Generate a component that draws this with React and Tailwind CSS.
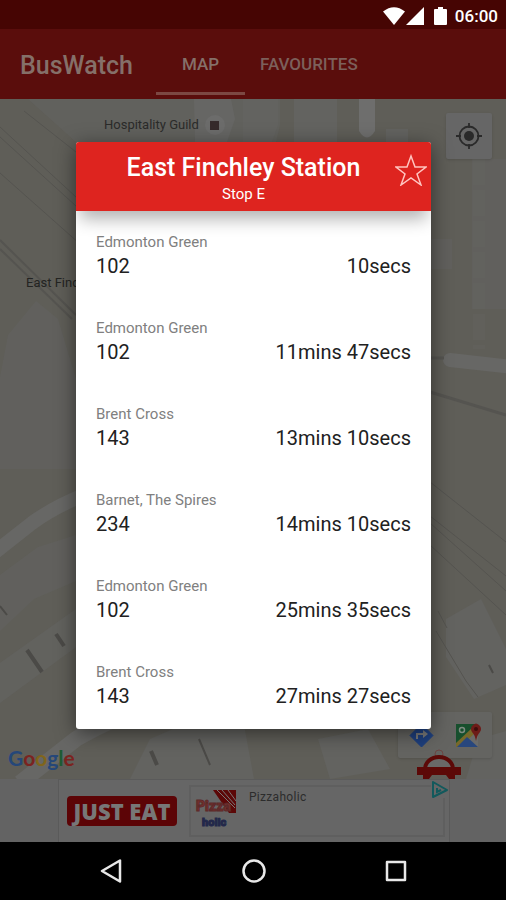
import { useState } from "react"

const arrivals = [
    { id: 1, destination: "Edmonton Green", route: "102", due: "10secs" },
    { id: 2, destination: "Edmonton Green", route: "102", due: "11mins 47secs" },
    { id: 3, destination: "Brent Cross", route: "143", due: "13mins 10secs" },
    { id: 4, destination: "Barnet, The Spires", route: "234", due: "14mins 10secs" },
    { id: 5, destination: "Edmonton Green", route: "102", due: "25mins 35secs" },
    { id: 6, destination: "Brent Cross", route: "143", due: "27mins 27secs" },
]

const StatusBar = () => (
    <div className="flex h-[29px] items-center justify-end bg-[#460503] pr-2 pt-0.5 text-white">
        <svg className="h-[18px] w-[22px]" viewBox="0 0 22 18" fill="currentColor" aria-hidden="true">
            <path d="M0 4.5Q11-4 22 4.5L11 18z" />
        </svg>
        <svg className="ml-px h-[18px] w-[18px]" viewBox="0 0 18 18" fill="currentColor" aria-hidden="true">
            <path d="M18 0v18H0z" />
        </svg>
        <svg className="ml-2.5 h-[18px] w-[13px]" viewBox="0 0 13 18" fill="currentColor" aria-hidden="true">
            <path d="M4 0h5v2h3q1 0 1 1v14q0 1-1 1H1q-1 0-1-1V3q0-1 1-1h3z" />
        </svg>
        <span className="ml-2 text-[17px] font-medium leading-5">06:00</span>
    </div>
)

const AppBar = ({ tab, onChange }) => (
    <header className="flex h-[70px] items-stretch bg-[#5a0d0c] text-[#7c605b]">
        <h1 className="flex w-[156px] items-center pl-5 pt-1 text-[25px] font-medium text-[#857069]">BusWatch</h1>
        <nav className="flex text-[17px] font-medium">
            <button
                onClick={() => onChange("map")}
                className={`mb-1 w-[89px] border-b-3 pt-2 ${tab === "map" ? "border-[#7c4843] text-[#857069]" : "border-transparent"}`}>
                MAP
            </button>
            <button
                onClick={() => onChange("favourites")}
                className={`mb-1 border-b-3 px-[15px] pt-2 ${tab === "favourites" ? "border-[#7c4843] text-[#857069]" : "border-transparent"}`}>
                FAVOURITES
            </button>
        </nav>
    </header>
)

// streets and buildings behind the dialog
const MapDrawing = () => (
    <svg className="absolute inset-0 h-full w-full" viewBox="0 0 506 680" preserveAspectRatio="xMidYMid slice" aria-hidden="true">
        <rect width="506" height="680" fill="#5f5e58" />
        {/* buildings */}
        <g fill="#636360">
            <path d="M28 0h252v26l-4 17H76z" opacity=".7" />
            <path d="M194 0h37l4 20-8 23h-32z" fill="#666664" />
            <path d="M243 0h35v26l-6 17h-29zM294 0h43v43h-43zM386 30h22v13h-22z" />
            <path d="M359 0h16v32q-8 13-16 0z" fill="#6e6e6d" />
            <path d="M8 236l28-34 22 18 18 60v90H0v-92z" opacity=".6" />
            <path d="M430 140h22v30h-22zM472 60h34v150h-34z" opacity=".6" />
            <path d="M0 476l38-28 38-12v46L34 500 0 532z" opacity=".6" />
            <path d="M0 564l76-54v38L0 604z" opacity=".8" />
            <path d="M446 520l35-20 25 50v36l-32 14-28-42z" />
            <path d="M150 640l46-20 48 6 10 54H130zM318 640l50-10 22 40-60 10z" />
            <path d="M478 640l28-8v48h-40z" />
        </g>
        {/* roads */}
        <g fill="none" stroke="#676765">
            <path d="M-6 454L32 424Q54 408 84 396" strokeWidth="14" />
            <path d="M20 684L76 640Q96 628 116 620" strokeWidth="16" />
            <path d="M450 261L512 268" strokeWidth="14" strokeLinecap="round" />
            <path d="M479 60v190" strokeWidth="12" strokeDasharray="26 5" opacity=".25" />
        </g>
        {/* railway lines */}
        <g fill="none" stroke="#555450" strokeWidth="1">
            <path d="M24 12l52 41M0 28l76 70M0 38l76 69M0 74l80 71" />
            <path d="M0 141l76 75M0 150l72 70" strokeWidth="2" />
            <path d="M430 383l76 60M430 417l76 60M430 424l76 68M430 446l76 70" />
            <path d="M430 259h14" strokeWidth="3" />
            <path d="M430 293l76 23" strokeWidth="3" />
            <path d="M438 512l9 17M436 532l30 50 12 16" />
        </g>
        <g stroke="#4b4a47" strokeWidth="4">
            <path d="M27 551l15 22M56 535l8 12M151 652l6 14" />
            <path d="M199 640l11 26M489 566l4 8M0 507l7 9" strokeWidth="2" />
        </g>
    </svg>
)

const MapView = () => (
    <main className="relative flex flex-1 flex-col justify-between overflow-hidden">
        <MapDrawing />
        <div className="absolute left-[104px] top-[14px] flex items-center gap-1.5 text-[13px] leading-6 text-[#2b2b2a]">
            Hospitality Guild
            <span className="grid size-5 place-items-center rounded-full bg-[#6c6c6b]">
                <span className="size-[9px] bg-[#362b2b]" />
            </span>
        </div>
        <span className="absolute left-[26px] top-[174px] text-[13px] leading-5 text-[#232422]">East Finchley</span>

        <button aria-label="My location" className="relative mr-3.5 mt-3.5 grid size-[46px] place-items-center self-end rounded-xs bg-[#666] text-[#2a2a2a] shadow">
            <svg className="size-[26px]" viewBox="0 0 26 26" fill="none" stroke="currentColor" strokeWidth="1.800" aria-hidden="true">
                <circle cx="13" cy="13" r="9.500" />
                <circle cx="13" cy="13" r="5" fill="currentColor" stroke="none" />
                <path d="M13 0v5M13 21v5M0 13h5M21 13h5" />
            </svg>
        </button>

        <div className="relative flex items-end justify-between pb-[21px] pr-3.5">
            <div className="-mb-4 pl-2 font-['Lato'] text-[21px] font-bold leading-8" aria-label="Google">
                <span className="text-[#254779]">G</span>
                <span className="text-[#7b2320]">o</span>
                <span className="text-[#80651c]">o</span>
                <span className="text-[#254779]">g</span>
                <span className="text-[#1e5b32]">l</span>
                <span className="text-[#7b2320]">e</span>
            </div>
            <div className="flex h-[46px] w-[94px] rounded-xs bg-[#646461] shadow">
                <button aria-label="Directions" className="grid flex-1 place-items-center">
                    <svg className="size-[25px]" viewBox="0 0 25 25" aria-hidden="true">
                        <path d="M12.500 1L24 12.500 12.500 24 1 12.500z" fill="#1e3f7d" stroke="#1e3f7d" strokeLinejoin="round" />
                        <path d="M8 16v-5h7" fill="none" stroke="#777" strokeWidth="2" />
                        <path d="M14 7l5 4-5 4z" fill="#777" />
                    </svg>
                </button>
                <button aria-label="Open in maps" className="grid flex-1 place-items-center">
                    <svg className="size-[28px]" viewBox="0 0 28 28" aria-hidden="true">
                        <path d="M1 3h22v23H1z" fill="#6b6b69" />
                        <path d="M1 3h20v6L1 26z" fill="#174f2d" />
                        <path d="M1 22L17 7l4 4L5 26H1z" fill="#77692a" />
                        <path d="M12 16l11 10H2z" fill="#28477d" />
                        <circle cx="7" cy="9" r="2.500" fill="none" stroke="#7d8a80" strokeWidth="1.500" />
                        <path d="M21 20q-1-6-4-9-2-3 0-6 4-5 8 0 2 3 0 6-3 3-4 9z" fill="#6d1b18" />
                        <circle cx="21" cy="8" r="2" fill="#3c0c0b" />
                    </svg>
                </button>
            </div>
        </div>

        {/* bus stop marker */}
        <svg className="absolute bottom-0 right-[45px] h-[30px] w-[44px]" viewBox="0 0 44 30" aria-label="Bus stop">
            <circle cx="22" cy="5" r="4" fill="none" stroke="#6d4543" strokeWidth="1" />
            <path d="M9 22a13 13 0 0 1 26 0z" fill="#696968" />
            <path d="M8 20a14 12 0 0 1 28 0" fill="none" stroke="#5c0907" strokeWidth="4" />
            <path d="M0 18h44v8h-6v4h-6l-3-4H15l-3 4H6v-4H0z" fill="#5c0907" />
        </svg>
    </main>
)

const AdBanner = () => (
    <aside className="flex h-[63px] justify-center bg-[#636363] pl-0.5">
        <a href="#ad" className="relative flex w-[392px] items-center border border-b-0 border-[#5a5a5a] bg-[#666] pl-2 pr-1">
            <span className="grid h-[30px] w-[110px] place-items-center rounded bg-[#5c0406] font-['Open_Sans'] text-[22px] font-extrabold leading-none text-[#777]">
                JUST EAT
            </span>
            <span className="ml-3 flex h-[52px] flex-1 items-start gap-2 border-2 border-[#5f5f5f] pl-1 pt-0.5">
                <svg className="h-[40px] w-[42px]" viewBox="0 0 42 40" aria-hidden="true">
                    <path d="M18 1h23v23H34z" fill="#5c0808" />
                    <path d="M22 1l18 18M27 1l13 15M33 1l8 11" stroke="#777" strokeWidth="1" />
                    <text x="1" y="22" fontFamily="Roboto, sans-serif" fontWeight="900" fontSize="14" fill="#76302c" stroke="#5c2a2a">Pizza</text>
                    <text x="7" y="37" fontFamily="Roboto, sans-serif" fontWeight="900" fontSize="11" fill="#23284a" stroke="#23284a">holic</text>
                </svg>
                <span className="pl-1 text-xs leading-4 tracking-wide text-[#2c2c2c]">Pizzaholic</span>
            </span>
            <svg className="absolute right-0 top-px h-[17px] w-[18px] bg-[#666]" viewBox="0 0 18 17" fill="none" stroke="#12595c" strokeWidth="2" aria-hidden="true">
                <path d="M2 1v15l14-7z" strokeLinejoin="round" />
                <path d="M6 7v4l4-2" />
            </svg>
        </a>
    </aside>
)

const StopDialog = () => {
    const [favourite, setFavourite] = useState(false)

    return (
        <div className="absolute inset-0 flex items-center pl-[76px] pr-[75px]">
            <section role="dialog" aria-labelledby="stop-name" className="w-full overflow-hidden rounded-[3px] bg-white shadow-[0_4px_20px_rgba(0,0,0,0.5)]">
                <div className="relative flex h-[69px] flex-col items-center bg-[#de241f] pt-2.5 text-white shadow-[0_12px_16px_-4px_rgba(0,0,0,0.3)]">
                    <h2 id="stop-name" className="pr-5 text-[25px] font-medium leading-8">East Finchley Station</h2>
                    <p className="pr-5 text-[15px] leading-5">Stop E</p>
                    <button
                        aria-label="Add to favourites"
                        aria-pressed={favourite}
                        onClick={() => setFavourite(!favourite)}
                        className="absolute right-1 top-3">
                        <svg className="size-8" viewBox="0 0 32 32" fill={favourite ? "#fff" : "none"} stroke="#ffc4bf" strokeWidth="1.500" aria-hidden="true">
                            <path d="M16 2l4 11h11l-9 7 4 11-10-7-10 7 4-11-9-7h11z" />
                        </svg>
                    </button>
                </div>
                {/* arrivals */}
                <ul className="pb-0.5">
                    {arrivals.map((arrival) => (
                        <li key={arrival.id} className="h-[86px] px-5 pt-[21px]">
                            <p className="text-[15px] leading-5 text-[#808080]">{arrival.destination}</p>
                            <div className="flex justify-between text-xl leading-7 text-[#212121]">
                                <span>{arrival.route}</span>
                                <span>{arrival.due}</span>
                            </div>
                        </li>
                    ))}
                </ul>
            </section>
        </div>
    )
}

const NavigationBar = () => (
    <nav className="flex h-[58px] items-center justify-center gap-[118px] bg-black pl-0.5 text-[#e8e8e8]">
        <button aria-label="Back">
            <svg className="size-6" viewBox="0 0 24 24" fill="none" stroke="currentColor" strokeWidth="2.500" strokeLinejoin="round" aria-hidden="true">
                <path d="M20 1.500v21L2 12z" />
            </svg>
        </button>
        <button aria-label="Home">
            <svg className="size-6" viewBox="0 0 24 24" fill="none" stroke="currentColor" strokeWidth="2.500" aria-hidden="true">
                <circle cx="12" cy="12" r="10.500" />
            </svg>
        </button>
        <button aria-label="Recent apps">
            <svg className="size-6" viewBox="0 0 24 24" fill="none" stroke="currentColor" strokeWidth="2.500" strokeLinejoin="round" aria-hidden="true">
                <path d="M3 3h18v18H3z" />
            </svg>
        </button>
    </nav>
)

const App = () => {
    const [tab, setTab] = useState("map")

    return (
        <div className="flex min-h-screen flex-col bg-black font-['Roboto',sans-serif]">
            <StatusBar />
            <div className="relative flex flex-1 flex-col">
                <AppBar tab={tab} onChange={setTab} />
                <MapView />
                <AdBanner />
                <StopDialog />
            </div>
            <NavigationBar />
        </div>
    )
}

export default App
